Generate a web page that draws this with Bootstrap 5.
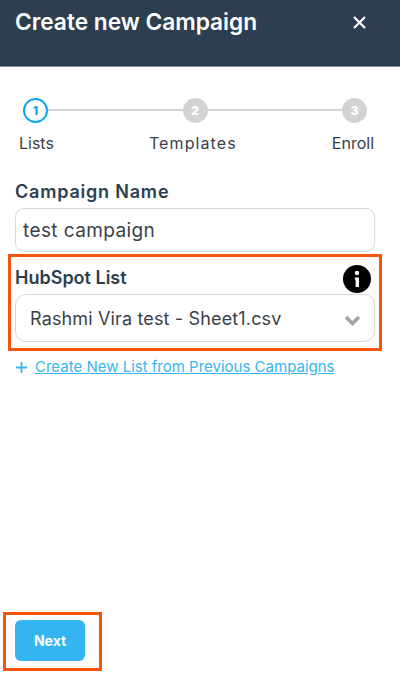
<!DOCTYPE html>
<html lang="en">
<head>
    <meta charset="UTF-8">
    <meta name="viewport" content="width=device-width, initial-scale=1.0">
    <title>Create new Campaign</title>
    <link href="https://cdn.jsdelivr.net/npm/bootstrap@5.3.0/dist/css/bootstrap.min.css" rel="stylesheet">
    <style>
        html, body { height: 100%; }
        body {
            font-family: "Inter", "Liberation Sans", sans-serif;
            color: #2c3e50;
            overflow: hidden;
        }
        .page-wrap { height: 673px; }
        .top-bar {
            height: 67px;
            background: #2c3e50;
            border-bottom: 1px solid #7f8b99;
            padding: 8px 15px 0;
        }
        .top-title { font-size: 22.7px; font-weight: 600; line-height: 27px; color: #fff; margin: 0; }
        .close-x { margin: 8px 19px 0 0; background: none; border: 0; padding: 0; line-height: 0; }
        .step-track { height: 25px; margin: 31px 33px 0 23px; }
        .step-track::before {
            content: "";
            position: absolute;
            left: 12px; right: 12px; top: 11px;
            height: 2px;
            background: #d3d3d3;
        }
        .step-dot {
            width: 25px; height: 25px;
            border-radius: 50%;
            background: #d3d3d3;
            color: #fff;
            font-size: 12px; font-weight: 800;
            z-index: 1;
        }
        .step-dot.on { background: #fff; border: 2px solid #0ea5f0; color: #0ea5f0; }
        .step-names { margin: 8px 26px 0 19px; height: 24px; font-size: 16px; line-height: 24px; color: #3a3f4a; }
        .step-wide { letter-spacing: 1.1px; }
        .form-area { padding: 25px 25px 0 15px; }
        .field-label { font-size: 18px; font-weight: 600; line-height: 24px; color: #2c3e50; margin: 0; }
        .label-wide { letter-spacing: .8px; }
        .name-input.form-control {
            height: 44px;
            margin-top: 4px;
            padding: 0 7px;
            border: 1px solid #d9d9d9;
            border-radius: 9px;
            font-size: 19px;
            letter-spacing: .4px;
            color: #3a3f4a;
        }
        .mark-box { border: 3px solid #f4550b; }
        .list-box {
            margin: 2px -7px 0 -7px;
            height: 97px;
            padding: 8px 4px 0;
        }
        .info-dot {
            width: 28px; height: 28px;
            border-radius: 50%;
            background: #000;
            color: #fff;
            margin: 0 4px -3px 0;
        }
        .list-select {
            height: 48px;
            margin-top: 4px;
            padding: 0 13px 0 14px;
            border: 1px solid #d9d9d9;
            border-radius: 11px;
            font-size: 18px;
            letter-spacing: .15px;
            color: #3a3f4a;
        }
        .new-list { margin-top: 5px; font-size: 15px; line-height: 22px; padding-left: 1px; }
        .new-list a { color: #38b6f1; margin-left: 8px; }
        .next-box { width: 99px; height: 59px; margin: 0 0 2px 3px; padding: 5px 0 0 9px; }
        .next-btn.btn {
            width: 70px; height: 41px;
            padding: 0;
            background: #34b4f1;
            border: 0;
            border-radius: 6px;
            color: #fff;
            font-size: 14px; font-weight: 700;
        }
    </style>
</head>
<body class="bg-white">
    <div class="page-wrap d-flex flex-column">
        <!-- Header -->
        <div class="top-bar d-flex justify-content-between align-items-start">
            <h1 class="top-title">Create new Campaign</h1>
            <button class="close-x" type="button" aria-label="Close">
                <svg width="13" height="13" viewBox="0 0 13 13"><path d="M1 1 12 12M12 1 1 12" stroke="#fff" stroke-width="2.2"/></svg>
            </button>
        </div>

        <!-- Steps -->
        <div class="step-track position-relative d-flex justify-content-between">
            <div class="step-dot on d-flex align-items-center justify-content-center">1</div>
            <div class="step-dot d-flex align-items-center justify-content-center">2</div>
            <div class="step-dot d-flex align-items-center justify-content-center">3</div>
        </div>
        <div class="step-names d-flex justify-content-between">
            <span>Lists</span>
            <span class="step-wide">Templates</span>
            <span>Enroll</span>
        </div>

        <!-- Form -->
        <div class="form-area">
            <p class="field-label label-wide">Campaign Name</p>
            <input class="form-control name-input" type="text" value="test campaign">

            <div class="list-box mark-box">
                <div class="d-flex justify-content-between align-items-center">
                    <p class="field-label">HubSpot List</p>
                    <div class="info-dot d-flex align-items-center justify-content-center">
                        <svg width="6" height="18" viewBox="0 0 6 18"><circle cx="3" cy="3" r="2.2" fill="#fff"/><path d="M.8 7.5H5V17H1.6V9.5H.8Z" fill="#fff"/></svg>
                    </div>
                </div>
                <div class="list-select d-flex justify-content-between align-items-center">
                    <span>Rashmi Vira test - Sheet1.csv</span>
                    <svg class="mt-1" width="17" height="11" viewBox="0 0 17 11"><path d="M2 2 8.5 8.5 15 2" fill="none" stroke="#a3a3a3" stroke-width="3.6"/></svg>
                </div>
            </div>

            <div class="new-list d-flex align-items-center">
                <svg width="11" height="11" viewBox="0 0 11 11"><path d="M5.5 0V11M0 5.5H11" stroke="#38b6f1" stroke-width="1.8"/></svg>
                <a href="#">Create New List from Previous Campaigns</a>
            </div>
        </div>

        <!-- Footer -->
        <div class="next-box mark-box mt-auto">
            <button class="btn next-btn" type="button">Next</button>
        </div>
    </div>
    <script src="https://cdn.jsdelivr.net/npm/bootstrap@5.3.0/dist/js/bootstrap.bundle.min.js"></script>
</body>
</html>
